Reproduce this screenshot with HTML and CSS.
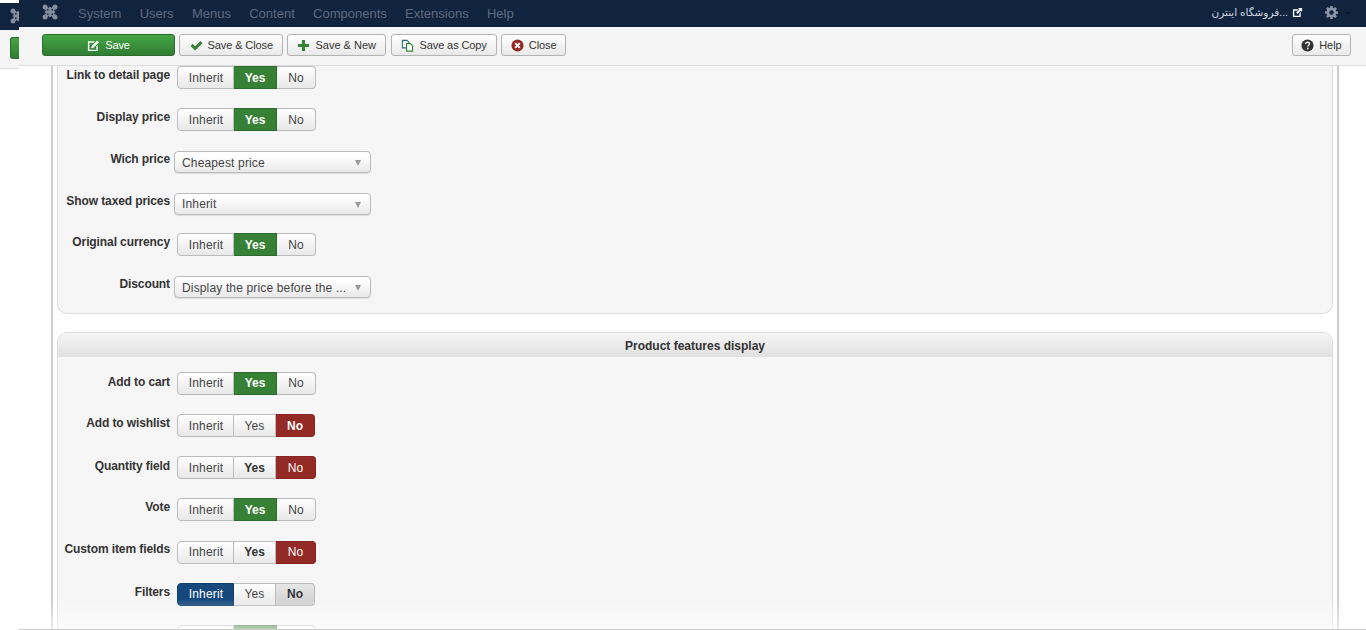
FILE: index.html
```html
<!DOCTYPE html>
<html lang="en">
<head>
<meta charset="utf-8">
<title>Product features display</title>
<link rel="stylesheet" href="styles.css">
</head>
<body>
<svg class="defs" width="0" height="0">
  <symbol id="joomla" viewBox="0 0 16 16">
    <path d="M3 3 13 13M13 3 3 13" stroke="#848d9c" stroke-width="3.600" fill="none"/>
    <path d="M2.500 8 8 2.500 13.500 8 8 13.500z" fill="#848d9c"/>
    <circle cx="3" cy="3" r="2.500" fill="#848d9c"/><circle cx="13" cy="3" r="2.500" fill="#848d9c"/><circle cx="3" cy="13" r="2.500" fill="#848d9c"/><circle cx="13" cy="13" r="2.500" fill="#848d9c"/>
    <circle cx="5.800" cy="5.800" r="1" fill="#2c3a52"/><circle cx="10.200" cy="5.800" r="1" fill="#2c3a52"/><circle cx="5.800" cy="10.200" r="1" fill="#2c3a52"/><circle cx="10.200" cy="10.200" r="1" fill="#2c3a52"/>
  </symbol>
</svg>
<div class="back-window">
  <div class="back-nav">
    <svg class="back-logo" viewBox="0 0 16 16"><use href="#joomla"/></svg>
  </div>
  <div class="back-bar"><span class="back-save"></span></div>
</div>

<div class="window">
  <nav class="navbar">
    <svg class="logo" viewBox="0 0 16 16"><use href="#joomla"/></svg>
    <ul class="menu">
      <li>System</li><li>Users</li><li>Menus</li><li>Content</li><li>Components</li><li>Extensions</li><li>Help</li>
    </ul>
    <div class="nav-right">
      <span class="site-name">فروشگاه اینترن...</span>
      <svg class="ext-icon" viewBox="0 0 12 12"><path d="M1 2.500h6L5.500 4H2.500v5.500H8V7l1.500-1.500V11H1z" fill="#fff"/><path d="M6.500 1H11v4.500L9.500 4 6 7.500 4.500 6 8 2.500z" fill="#fff"/></svg>
      <svg class="gear" viewBox="0 0 14 14"><path fill-rule="evenodd" d="M5.800 0h2.400l.3 1.900 1.100.5L11.200 1.200l1.600 1.700-1.100 1.500.5 1.200 1.800.3v2.400l-1.800.3-.5 1.200 1.100 1.500-1.600 1.700-1.600-1.100-1.100.4L8.200 14H5.800l-.3-1.900-1.100-.4-1.600 1.100-1.600-1.700 1.100-1.500-.5-1.200L0 8.100V5.700l1.800-.3.5-1.200-1.100-1.500 1.600-1.700 1.600 1.200 1.100-.5zM7 4.600a2.400 2.400 0 1 0 0 4.800 2.400 2.400 0 0 0 0-4.800z" fill="#8a93a3"/></svg>
      <span class="nav-caret"></span>
    </div>
  </nav>

  <div class="toolbar">
    <button class="tool tool-save">
      <svg class="ico" viewBox="0 0 14 14"><path d="M1 2.500h7.500L7 4H2.500v7.500h7.500V8l1.500-1.500V13H1z" fill="#fff"/><path d="M5 7.500 11 1.500 13 3.500 7 9.500 4.500 10z" fill="#fff"/></svg>Save
    </button>
    <button class="tool tool-wide">
      <svg class="ico" viewBox="0 0 14 14"><path d="M.5 7.500 2.800 5.200 5.500 7.900 11.200 2.200 13.500 4.500 5.500 12.500z" fill="#378137"/></svg>Save &amp; Close
    </button>
    <button class="tool tool-new">
      <svg class="ico" viewBox="0 0 14 14"><path d="M5.300 1h3.400v4.300H13v3.400H8.700V13H5.300V8.700H1V5.300h4.300z" fill="#378137"/></svg>Save &amp; New
    </button>
    <button class="tool tool-wide tool-copy">
      <svg class="ico" viewBox="0 0 14 14"><path d="M1.500 1.500h5l2 2v6h-7z" fill="none" stroke="#2f6f80" stroke-width="1.200"/><path d="M6 5h4l2.500 2.500v5.500H6z" fill="#fff" stroke="#378137" stroke-width="1.200"/></svg>Save as Copy
    </button>
    <button class="tool tool-close">
      <svg class="ico" viewBox="0 0 14 14"><circle cx="7" cy="7" r="6.500" fill="#942a25"/><path d="M4.500 4.500 9.500 9.500M9.500 4.500 4.500 9.500" stroke="#fff" stroke-width="2"/></svg>Close
    </button>
    <button class="tool tool-help">
      <svg class="ico" viewBox="0 0 14 14"><circle cx="7" cy="7" r="6.500" fill="#333"/><path d="M4.900 5.400C5 2.900 9.200 2.900 9.200 5.200 9.200 6.700 7.300 6.700 7.300 8.200" fill="none" stroke="#fff" stroke-width="1.500"/><rect x="6.400" y="9.300" width="1.700" height="1.700" fill="#fff"/></svg>Help
    </button>
  </div>

  <main class="content">
    <div class="column">
      <section class="panel panel-clipped">
        <div class="row"><label class="label">Link to detail page</label><div class="group"><span class="opt">Inherit</span><span class="opt on-green">Yes</span><span class="opt">No</span></div></div>
        <div class="row"><label class="label">Display price</label><div class="group"><span class="opt">Inherit</span><span class="opt on-green">Yes</span><span class="opt">No</span></div></div>
        <div class="row"><label class="label">Wich price</label><div class="select select-low">Cheapest price</div></div>
        <div class="row row-short"><label class="label">Show taxed prices</label><div class="select">Inherit</div></div>
        <div class="row"><label class="label">Original currency</label><div class="group"><span class="opt">Inherit</span><span class="opt on-green">Yes</span><span class="opt">No</span></div></div>
        <div class="row row-last"><label class="label">Discount</label><div class="select select-low">Display the price before the ...</div></div>
      </section>

      <section class="panel">
        <h3 class="panel-head">Product features display</h3>
        <div class="panel-body">
          <div class="row"><label class="label label-low">Add to cart</label><div class="group group-high"><span class="opt">Inherit</span><span class="opt on-green">Yes</span><span class="opt">No</span></div></div>
          <div class="row"><label class="label">Add to wishlist</label><div class="group"><span class="opt">Inherit</span><span class="opt">Yes</span><span class="opt on-red strong">No</span></div></div>
          <div class="row"><label class="label label-low">Quantity field</label><div class="group"><span class="opt">Inherit</span><span class="opt strong">Yes</span><span class="opt on-red">No</span></div></div>
          <div class="row row-tall"><label class="label">Vote</label><div class="group"><span class="opt">Inherit</span><span class="opt on-green">Yes</span><span class="opt">No</span></div></div>
          <div class="row"><label class="label label-high">Custom item fields</label><div class="group group-high"><span class="opt">Inherit</span><span class="opt strong">Yes</span><span class="opt on-red">No</span></div></div>
          <div class="row"><label class="label">Filters</label><div class="group group-high"><span class="opt on-blue">Inherit</span><span class="opt">Yes</span><span class="opt off-grey strong">No</span></div></div>
          <div class="row"><span class="label"></span><div class="group"><span class="opt"></span><span class="opt on-green"></span><span class="opt"></span></div></div>
        </div>
      </section>
    </div>
    <div class="fade"></div>
  </main>
</div>
</body>
</html>
```
FILE: styles.css
```css
* { box-sizing: border-box; }
html, body { margin: 0; height: 100%; overflow: hidden; background: #fff; }
body { font-family: "Liberation Sans", Arial, "DejaVu Sans", sans-serif; font-size: 12px; color: #333; }

.defs { position: absolute; }

/* window peeking out from behind */
.back-window { position: absolute; left: 0; top: 3px; width: 19px; height: 66px; background: #f5f5f5; border-bottom: 1px solid #ddd; }
.back-nav { height: 27px; background: #10233f; padding: 5px 0 0 10px; overflow: hidden; }
.back-logo { display: block; width: 16px; height: 16px; }
.back-bar { padding: 7px 0 0 10px; }
.back-save { display: block; width: 9px; height: 22px; border-radius: 3px 0 0 3px; background: linear-gradient(#46a546, #2f7d32); border: 1px solid #2c6a2e; border-right: 0; }

/* front window */
.window { position: absolute; left: 19px; right: 0; top: 0; height: 630px; display: flex; flex-direction: column; background: #fff; border-bottom: 1px solid #ccc; }

.navbar { height: 27px; flex: none; display: flex; align-items: center; background: #10233f; padding-left: 23px; color: #5f6b7f; }
.logo { width: 16px; height: 16px; margin-top: -3px; }
.menu { list-style: none; margin: -1px 0 0 20px; padding: 0; display: flex; gap: 18.300px; font-size: 13px; }
.nav-right { margin-left: auto; display: flex; align-items: center; padding-right: 15px; margin-top: -3px; }
.site-name { font-size: 10.500px; color: #cfd6e0; font-family: "Liberation Sans", "DejaVu Sans", sans-serif; }
.ext-icon { width: 11px; height: 11px; margin-left: 4px; }
.gear { width: 13px; height: 13px; margin-left: 22px; }
.nav-caret { width: 0; height: 0; margin-left: 7px; margin-top: 2px; border-left: 3px solid transparent; border-right: 3px solid transparent; border-top: 3px solid #0a1526; }

.toolbar { height: 39px; flex: none; display: flex; gap: 4px; padding: 7px 15px 0 23px; background: #f5f5f5; border-bottom: 1px solid #ddd; }
.tool { height: 22px; display: flex; align-items: center; justify-content: center; gap: 5px; padding: 0 9px; font: 11px/1 "Liberation Sans", Arial, sans-serif; letter-spacing: -.1px; color: #333; background: linear-gradient(#fff, #e9e9e9); border: 1px solid #b3b3b3; border-radius: 3px; }
.ico { width: 13px; height: 13px; flex: none; }
.tool-save { width: 133px; color: #fff; background: linear-gradient(#46a546, #2f7d32); border-color: #2c6a2e; }
.tool-wide { padding: 0 9.500px; }
.tool-new { padding: 0 9px; letter-spacing: 0; }
.tool-copy { margin-left: 1px; }
.tool-close { padding: 0 8.500px; }
.tool-help { margin-left: auto; padding: 0 8.500px; }

.content { position: relative; flex: 1; overflow: hidden; }
.column { margin-left: 32px; border-left: 2px solid #ccc; border-right: 2px solid #ccc; padding: 0 4px; height: 100%; width: calc(100% - 59px); }

.panel { background: #f6f6f6; border: 1px solid #ddd; border-radius: 10px; margin-bottom: 18px; }
.panel-clipped { border-top: 0; border-radius: 0 0 10px 10px; padding-bottom: 14px; }
.panel-head { margin: 0; height: 24px; line-height: 26px; text-align: center; font-size: 12px; font-weight: bold; color: #333; background: linear-gradient(#f6f6f6, #e0e0e0); border-radius: 9px 9px 0 0; }
.panel-body { padding-top: 15px; }

.row { height: 42px; display: flex; align-items: flex-start; }
.row-short { height: 41px; }
.row-tall { height: 43px; }
.row-last { height: 24px; }
.label { width: 112px; flex: none; text-align: right; font-weight: bold; font-size: 12px; line-height: 14px; padding-top: 2px; color: #333; white-space: nowrap; letter-spacing: -.1px; }
.label-low { padding-top: 3px; }
.label-high { padding-top: 1px; }

.group { display: flex; margin-left: 7px; height: 23px; }
.opt { display: block; height: 23px; text-align: center; line-height: 22px; font-size: 12px; letter-spacing: .15px; color: #444; background: linear-gradient(#fff, #e8e8e8); border: 1px solid #bbb; border-left-width: 0; }
.group-high .opt { line-height: 20px; }
.opt:nth-child(1) { width: 57px; text-indent: 1px; border-left-width: 1px; border-radius: 4px 0 0 4px; }
.opt:nth-child(2) { width: 42px; }
.opt:nth-child(3) { width: 39px; border-radius: 0 4px 4px 0; }
.opt.on-green:nth-child(2) { width: 43px; }
.opt.on-red:not(.strong) { width: 40px; }
.strong { font-weight: bold; color: #333; letter-spacing: 0; }
.on-green { background: #378137; border-color: #2d6a2d; color: #fff; font-weight: bold; letter-spacing: 0; }
.on-red { background: #942a25; border-color: #8a2420; color: #fff; }
.on-blue { background: #15497c; border-color: #123f6c; color: #fff; }
.off-grey { background: linear-gradient(#e6e6e6, #d0d0d0); }
.on-red.strong { color: #fff; }

.select { position: relative; width: 197px; height: 22px; margin: 1px 0 0 4px; padding-left: 7px; line-height: 21px; font-size: 12px; letter-spacing: .15px; color: #444; background: linear-gradient(#fff 20%, #e8e8e8); border: 1px solid #bbb; border-radius: 4px; box-shadow: 0 1px 1px rgba(0,0,0,.1); }
.select-low { line-height: 23px; }
.select::after { content: ""; position: absolute; right: 9px; top: 8px; border-left: 3.500px solid transparent; border-right: 3.500px solid transparent; border-top: 6px solid #999; }

.fade { position: absolute; left: 0; right: 0; bottom: 0; height: 30px; background: linear-gradient(rgba(255,255,255,0), rgba(255,255,255,.6)); }
```
